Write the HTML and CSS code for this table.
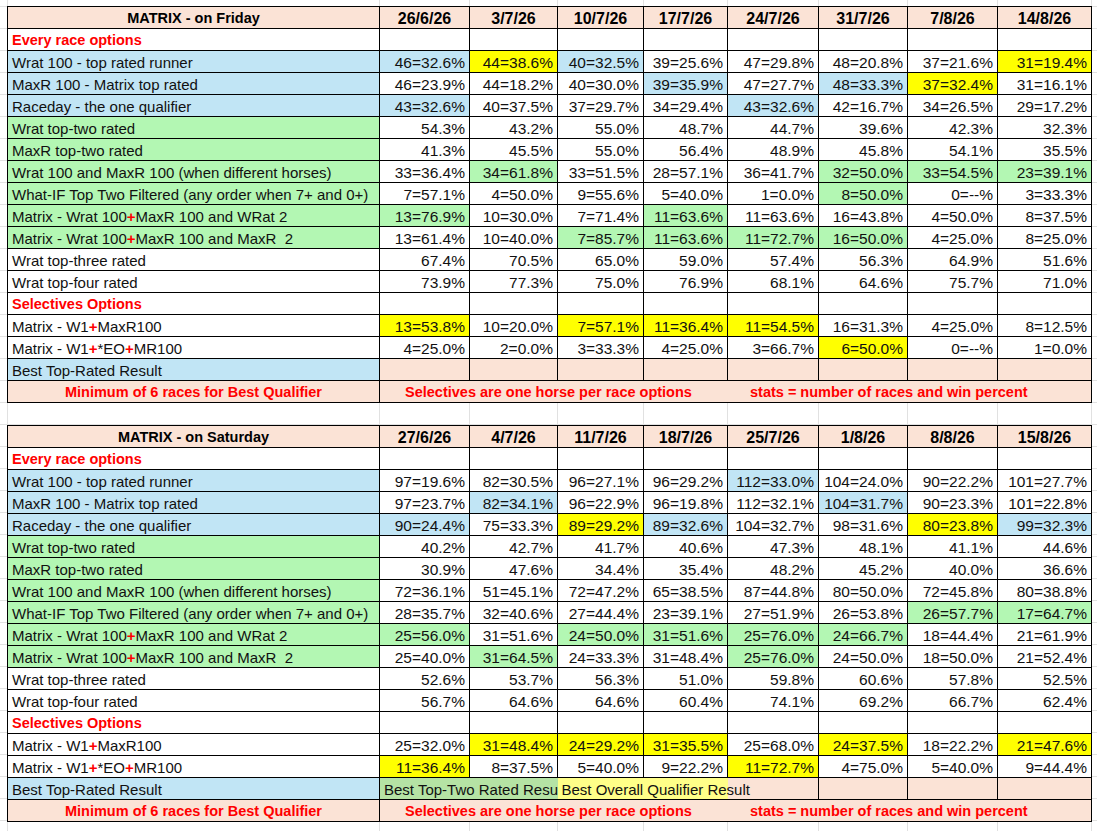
FILE: index.html
```html
<!DOCTYPE html>
<html lang="en">
<head>
<meta charset="utf-8">
<title>MATRIX results</title>
<link rel="stylesheet" href="styles.css">
</head>
<body>
<main class="sheet">

<table class="matrix">
<colgroup>
<col class="w372"><col class="w90"><col class="w88"><col class="w86"><col class="w84"><col class="w91"><col class="w89"><col class="w90"><col class="w94">
</colgroup>
<thead>
<tr><th class="title">MATRIX - on Friday</th><th>26/6/26</th><th>3/7/26</th><th>10/7/26</th><th>17/7/26</th><th>24/7/26</th><th>31/7/26</th><th>7/8/26</th><th>14/8/26</th></tr>
</thead>
<tbody>
<tr><td class="sec">Every race options</td><td></td><td></td><td></td><td></td><td></td><td></td><td></td><td></td></tr>
<tr><td class="b">Wrat 100 - top rated runner</td><td class="b">46=32.6%</td><td class="y">44=38.6%</td><td class="b">40=32.5%</td><td>39=25.6%</td><td>47=29.8%</td><td>48=20.8%</td><td>37=21.6%</td><td class="y">31=19.4%</td></tr>
<tr><td class="b">MaxR 100 - Matrix top rated</td><td>46=23.9%</td><td>44=18.2%</td><td>40=30.0%</td><td class="b">39=35.9%</td><td>47=27.7%</td><td class="b">48=33.3%</td><td class="y">37=32.4%</td><td>31=16.1%</td></tr>
<tr><td class="b">Raceday - the one qualifier</td><td class="b">43=32.6%</td><td>40=37.5%</td><td>37=29.7%</td><td>34=29.4%</td><td class="b">43=32.6%</td><td>42=16.7%</td><td>34=26.5%</td><td>29=17.2%</td></tr>
<tr><td class="g">Wrat top-two rated</td><td>54.3%</td><td>43.2%</td><td>55.0%</td><td>48.7%</td><td>44.7%</td><td>39.6%</td><td>42.3%</td><td>32.3%</td></tr>
<tr><td class="g">MaxR top-two rated</td><td>41.3%</td><td>45.5%</td><td>55.0%</td><td>56.4%</td><td>48.9%</td><td>45.8%</td><td>54.1%</td><td>35.5%</td></tr>
<tr><td class="g">Wrat 100 and MaxR 100 (when different horses)</td><td>33=36.4%</td><td class="g">34=61.8%</td><td>33=51.5%</td><td>28=57.1%</td><td>36=41.7%</td><td class="g">32=50.0%</td><td class="g">33=54.5%</td><td class="g">23=39.1%</td></tr>
<tr><td class="g">What-IF Top Two Filtered (any order when 7+ and 0+)</td><td>7=57.1%</td><td>4=50.0%</td><td>9=55.6%</td><td>5=40.0%</td><td>1=0.0%</td><td class="g">8=50.0%</td><td>0=--%</td><td>3=33.3%</td></tr>
<tr><td class="g">Matrix - Wrat 100<b class="plus">+</b>MaxR 100 and WRat 2</td><td class="g">13=76.9%</td><td>10=30.0%</td><td>7=71.4%</td><td class="g">11=63.6%</td><td>11=63.6%</td><td>16=43.8%</td><td>4=50.0%</td><td>8=37.5%</td></tr>
<tr><td class="g">Matrix - Wrat 100<b class="plus">+</b>MaxR 100 and MaxR&nbsp; 2</td><td>13=61.4%</td><td>10=40.0%</td><td class="g">7=85.7%</td><td class="g">11=63.6%</td><td class="g">11=72.7%</td><td class="g">16=50.0%</td><td>4=25.0%</td><td>8=25.0%</td></tr>
<tr><td>Wrat top-three rated</td><td>67.4%</td><td>70.5%</td><td>65.0%</td><td>59.0%</td><td>57.4%</td><td>56.3%</td><td>64.9%</td><td>51.6%</td></tr>
<tr><td>Wrat top-four rated</td><td>73.9%</td><td>77.3%</td><td>75.0%</td><td>76.9%</td><td>68.1%</td><td>64.6%</td><td>75.7%</td><td>71.0%</td></tr>
<tr><td class="sec">Selectives Options</td><td></td><td></td><td></td><td></td><td></td><td></td><td></td><td></td></tr>
<tr class="sel"><td>Matrix - W1<b class="plus">+</b>MaxR100</td><td class="y">13=53.8%</td><td>10=20.0%</td><td class="y">7=57.1%</td><td class="y">11=36.4%</td><td class="y">11=54.5%</td><td>16=31.3%</td><td>4=25.0%</td><td>8=12.5%</td></tr>
<tr class="sel"><td>Matrix - W1<b class="plus">+</b>*EO<b class="plus">+</b>MR100</td><td>4=25.0%</td><td>2=0.0%</td><td>3=33.3%</td><td>4=25.0%</td><td>3=66.7%</td><td class="y">6=50.0%</td><td>0=--%</td><td>1=0.0%</td></tr>
<tr class="sel"><td class="b">Best Top-Rated Result</td><td class="p"></td><td class="p"></td><td class="p"></td><td class="p"></td><td class="p"></td><td class="p"></td><td class="p"></td><td class="p"></td></tr>
<tr class="notes"><td>Minimum of 6 races for Best Qualifier</td><td colspan="8"><span class="note-a">Selectives are one horse per race options</span><span>stats = number of races and win percent</span></td></tr>
</tbody>
</table>

<table class="matrix">
<colgroup>
<col class="w372"><col class="w90"><col class="w88"><col class="w86"><col class="w84"><col class="w91"><col class="w89"><col class="w90"><col class="w94">
</colgroup>
<thead>
<tr><th class="title">MATRIX - on Saturday</th><th>27/6/26</th><th>4/7/26</th><th>11/7/26</th><th>18/7/26</th><th>25/7/26</th><th>1/8/26</th><th>8/8/26</th><th>15/8/26</th></tr>
</thead>
<tbody>
<tr><td class="sec">Every race options</td><td></td><td></td><td></td><td></td><td></td><td></td><td></td><td></td></tr>
<tr><td class="b">Wrat 100 - top rated runner</td><td>97=19.6%</td><td>82=30.5%</td><td>96=27.1%</td><td>96=29.2%</td><td class="b">112=33.0%</td><td>104=24.0%</td><td>90=22.2%</td><td>101=27.7%</td></tr>
<tr><td class="b">MaxR 100 - Matrix top rated</td><td>97=23.7%</td><td class="b">82=34.1%</td><td>96=22.9%</td><td>96=19.8%</td><td>112=32.1%</td><td class="b">104=31.7%</td><td>90=23.3%</td><td>101=22.8%</td></tr>
<tr><td class="b">Raceday - the one qualifier</td><td class="b">90=24.4%</td><td>75=33.3%</td><td class="y">89=29.2%</td><td class="b">89=32.6%</td><td>104=32.7%</td><td>98=31.6%</td><td class="y">80=23.8%</td><td class="b">99=32.3%</td></tr>
<tr><td class="g">Wrat top-two rated</td><td>40.2%</td><td>42.7%</td><td>41.7%</td><td>40.6%</td><td>47.3%</td><td>48.1%</td><td>41.1%</td><td>44.6%</td></tr>
<tr><td class="g">MaxR top-two rated</td><td>30.9%</td><td>47.6%</td><td>34.4%</td><td>35.4%</td><td>48.2%</td><td>45.2%</td><td>40.0%</td><td>36.6%</td></tr>
<tr><td class="g">Wrat 100 and MaxR 100 (when different horses)</td><td>72=36.1%</td><td>51=45.1%</td><td>72=47.2%</td><td>65=38.5%</td><td>87=44.8%</td><td>80=50.0%</td><td>72=45.8%</td><td>80=38.8%</td></tr>
<tr><td class="g">What-IF Top Two Filtered (any order when 7+ and 0+)</td><td>28=35.7%</td><td>32=40.6%</td><td>27=44.4%</td><td>23=39.1%</td><td>27=51.9%</td><td>26=53.8%</td><td class="g">26=57.7%</td><td class="g">17=64.7%</td></tr>
<tr><td class="g">Matrix - Wrat 100<b class="plus">+</b>MaxR 100 and WRat 2</td><td class="g">25=56.0%</td><td>31=51.6%</td><td class="g">24=50.0%</td><td class="g">31=51.6%</td><td class="g">25=76.0%</td><td class="g">24=66.7%</td><td>18=44.4%</td><td>21=61.9%</td></tr>
<tr><td class="g">Matrix - Wrat 100<b class="plus">+</b>MaxR 100 and MaxR&nbsp; 2</td><td>25=40.0%</td><td class="g">31=64.5%</td><td>24=33.3%</td><td>31=48.4%</td><td class="g">25=76.0%</td><td>24=50.0%</td><td>18=50.0%</td><td>21=52.4%</td></tr>
<tr><td>Wrat top-three rated</td><td>52.6%</td><td>53.7%</td><td>56.3%</td><td>51.0%</td><td>59.8%</td><td>60.6%</td><td>57.8%</td><td>52.5%</td></tr>
<tr><td>Wrat top-four rated</td><td>56.7%</td><td>64.6%</td><td>64.6%</td><td>60.4%</td><td>74.1%</td><td>69.2%</td><td>66.7%</td><td>62.4%</td></tr>
<tr><td class="sec">Selectives Options</td><td></td><td></td><td></td><td></td><td></td><td></td><td></td><td></td></tr>
<tr class="sel"><td>Matrix - W1<b class="plus">+</b>MaxR100</td><td>25=32.0%</td><td class="y">31=48.4%</td><td class="y">24=29.2%</td><td class="y">31=35.5%</td><td>25=68.0%</td><td class="y">24=37.5%</td><td>18=22.2%</td><td class="y">21=47.6%</td></tr>
<tr class="sel"><td>Matrix - W1<b class="plus">+</b>*EO<b class="plus">+</b>MR100</td><td class="y">11=36.4%</td><td>8=37.5%</td><td>5=40.0%</td><td>9=22.2%</td><td class="y">11=72.7%</td><td>4=75.0%</td><td>5=40.0%</td><td>9=44.4%</td></tr>
<tr class="sel"><td class="b">Best Top-Rated Result</td><td class="g2 txt" colspan="2">Best Top-Two Rated Result</td><td class="ly txt spill" colspan="2">Best Overall Qualifier Result</td><td class="p open"></td><td class="p"></td><td class="p"></td><td class="p"></td></tr>
<tr class="notes"><td>Minimum of 6 races for Best Qualifier</td><td colspan="8"><span class="note-a">Selectives are one horse per race options</span><span>stats = number of races and win percent</span></td></tr>
</tbody>
</table>

</main>
</body>
</html>
```

FILE: styles.css
```css
html, body {
  margin: 0;
  padding: 0;
}

.sheet {
  box-sizing: border-box;
  min-height: 100vh;
  padding: 6px 0 0 7px;
  background-color: #ffffff;
  background-image:
    linear-gradient(#e1e1e1 0 1px, transparent 1px),
    linear-gradient(#e1e1e1, #e1e1e1),
    linear-gradient(#e1e1e1, #e1e1e1),
    linear-gradient(#e1e1e1, #e1e1e1),
    linear-gradient(#e1e1e1, #e1e1e1),
    linear-gradient(#e1e1e1, #e1e1e1),
    linear-gradient(#e1e1e1, #e1e1e1),
    linear-gradient(#e1e1e1, #e1e1e1),
    linear-gradient(#e1e1e1, #e1e1e1),
    linear-gradient(#e1e1e1, #e1e1e1),
    linear-gradient(#e1e1e1, #e1e1e1);
  background-size:
    100% 22px,
    1px 100%, 1px 100%, 1px 100%, 1px 100%, 1px 100%,
    1px 100%, 1px 100%, 1px 100%, 1px 100%, 1px 100%;
  background-position:
    0 6px,
    7px 0, 379px 0, 469px 0, 557px 0, 643px 0,
    727px 0, 818px 0, 907px 0, 997px 0, 1091px 0;
  background-repeat:
    repeat,
    no-repeat, no-repeat, no-repeat, no-repeat, no-repeat,
    no-repeat, no-repeat, no-repeat, no-repeat, no-repeat;
}

.matrix {
  border-collapse: collapse;
  table-layout: fixed;
  width: 1085px;
  font-family: "Liberation Sans", Arial, sans-serif;
  font-size: 15.5px;
  color: #111111;
  margin: 0 0 22px 0;
}

.w372 { width: 372px; }
.w94 { width: 94px; }
.w91 { width: 91px; }
.w90 { width: 90px; }
.w89 { width: 89px; }
.w88 { width: 88px; }
.w86 { width: 86px; }
.w84 { width: 84px; }

.matrix tr {
  height: 22px;
}

.matrix th,
.matrix td {
  border: 1px solid #000;
  padding: 0 4px;
  height: 22px;
  box-sizing: border-box;
  line-height: 19px;
  vertical-align: bottom;
  white-space: nowrap;
  overflow: hidden;
  background: #ffffff;
  text-align: right;
}

.matrix th {
  background: #fbe3d6;
  font-weight: bold;
  font-size: 16px;
  text-align: center;
  color: #000;
}

.matrix th.title {
  font-size: 14.5px;
}

.matrix td:first-child {
  text-align: left;
  font-size: 15px;
}

.matrix td.sec {
  color: #ff0000;
  font-weight: bold;
  font-size: 14.5px;
}

.plus {
  color: #ff0000;
  font-weight: bold;
}

.matrix .sel td {
  border-top-color: #3a3a3a;
}

.matrix td.b { background: #c1e5f5; }
.matrix td.y { background: #ffff00; }
.matrix td.g { background: #b3f7b3; }
.matrix td.p { background: #fbe3d6; }
.matrix td.g2 { background: #b5e3a4; }
.matrix td.ly { background: #ffff88; }

.matrix td.txt {
  text-align: left;
  font-size: 15px;
}

.matrix td.spill {
  overflow: visible;
  border-right-style: hidden;
}

.matrix td.open {
  border-left-style: hidden;
}

.matrix td.g2 {
  border-right-style: hidden;
}

.matrix .notes td {
  background: #fbe3d6;
  color: #ff0000;
  font-weight: bold;
  font-size: 14.5px;
}

.matrix .notes td:first-child {
  text-align: center;
}

.matrix .notes td + td {
  text-align: left;
  padding-left: 25px;
}

.note-a {
  display: inline-block;
  width: 345px;
}
```
